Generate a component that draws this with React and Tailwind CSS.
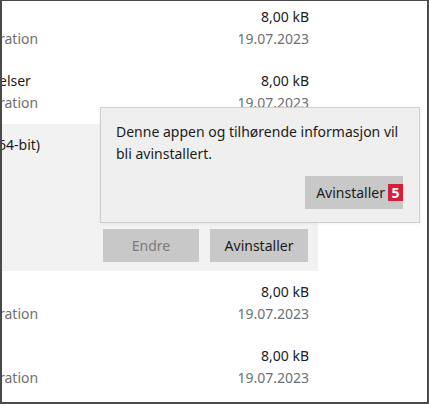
import React from "react";

const rows = [
  { name: "", sub: "ration", size: "8,00 kB", date: "19.07.2023" },
  { name: "elser", sub: "ration", size: "8,00 kB", date: "19.07.2023" },
];

const rowsAfter = [
  { name: "", sub: "ration", size: "8,00 kB", date: "19.07.2023" },
  { name: "", sub: "ration", size: "8,00 kB", date: "19.07.2023" },
];

function Row({ row }) {
  return (
    <div className="flex h-[64px] w-[318px] justify-between pr-[11px] pt-[10px]">
      <div className="-ml-[3px] flex flex-col">
        <span className="h-[22px] text-[#1b1b1b]">{row.name}</span>
        <span className="h-[22px] text-[#707070]">{row.sub}</span>
      </div>
      <div className="flex flex-col items-end">
        <span className="h-[22px] text-[#1b1b1b]">{row.size}</span>
        <span className="h-[22px] text-[#707070]">{row.date}</span>
      </div>
    </div>
  );
}

export default function App() {
  return (
    <div
      className="relative h-[404px] w-[429px] overflow-hidden border-x-2 border-t border-b-2 border-[#4a4a4a] bg-white text-[14px] leading-[22px]"
      style={{ fontFamily: '"Noto Sans", "Open Sans", sans-serif' }}
    >
      <div className="-mt-[5px] flex flex-col">
        {rows.map((r, i) => (
          <Row key={i} row={r} />
        ))}

        {/* selected row */}
        <div className="flex h-[147px] w-[316px] flex-col bg-[#f2f2f2] pt-[10px]">
          <span className="-ml-[4px] h-[22px] text-[#1b1b1b]">64-bit)</span>
          <div className="mt-[73px] flex gap-[11px] pl-[101px]">
            <button className="h-[33px] w-[96px] bg-[#c8c8c8] text-[#7b7b7b]">Endre</button>
            <button className="h-[33px] w-[98px] bg-[#c8c8c8] text-[#1b1b1b]">Avinstaller</button>
          </div>
        </div>

        {rowsAfter.map((r, i) => (
          <Row key={i} row={r} />
        ))}
      </div>

      {/* confirm flyout */}
      <div className="absolute left-[98px] top-[106px] flex h-[116px] w-[320px] flex-col border border-[#cdcdcd] bg-[#efefef] px-[15px] pt-[13px] pb-[13px] shadow-[0_1px_3px_rgba(0,0,0,0.06)]">
        <p className="text-[#1b1b1b]">
          Denne appen og tilhørende informasjon vil
          <br />
          bli avinstallert.
        </p>
        <div className="mt-auto flex justify-end pr-[1px]">
          <button className="flex h-[33px] w-[98px] items-center justify-end gap-[3px] bg-[#c8c8c8] text-[#1b1b1b]">
            <span>Avinstaller</span>
            <span className="flex h-[17px] w-[15px] items-center justify-center bg-[#d21f3c] text-[14px] font-bold leading-none text-white">
              5
            </span>
          </button>
        </div>
      </div>
    </div>
  );
}
